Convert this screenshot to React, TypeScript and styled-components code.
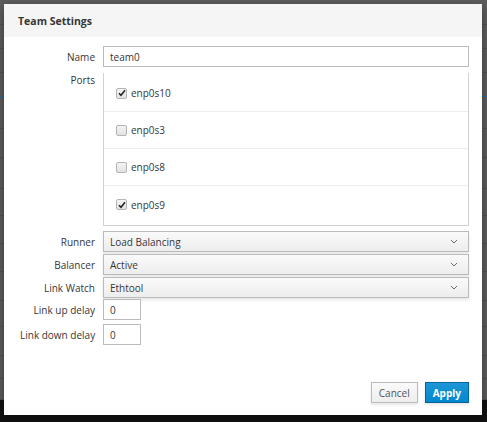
import React from "react";
import styled, { createGlobalStyle } from "styled-components";

const Global = createGlobalStyle`
  html, body { margin: 0; padding: 0; }
  body {
    width: 487px;
    height: 422px;
    overflow: hidden;
    font-family: "Open Sans", "Liberation Sans", sans-serif;
    font-size: 10px;
    color: #363636;
  }
`;

const Page = styled.div`
  position: relative;
  width: 487px;
  height: 422px;
  background: #5d5d5d;
  display: flex;
  flex-direction: column;
`;

const BgRow = styled.div<{ $h: number; $accent?: boolean }>`
  height: ${(p) => p.$h}px;
  box-sizing: border-box;
  border-bottom: 1px solid ${(p) => (p.$accent ? "#1b6aa5" : "#505050")};
`;

const BgFooter = styled.div`
  flex: 1;
  background: #121212;
`;

const Modal = styled.div`
  position: absolute;
  left: 4px;
  top: 4px;
  width: 478px;
  height: 411px;
  background: #fff;
  box-shadow: 0 3px 9px rgba(0, 0, 0, 0.4);
  display: flex;
  flex-direction: column;
`;

const Header = styled.div`
  height: 33px;
  background: #f5f5f5;
  display: flex;
  align-items: center;
  padding-left: 14px;
  font-weight: 700;
  font-size: 10.5px;
  color: #363636;
`;

const Body = styled.div`
  flex: 1;
  display: flex;
  flex-direction: column;
  padding: 9px 13px 0 16px;
`;

const Row = styled.div<{ $mt: number; $top?: boolean }>`
  display: flex;
  align-items: ${(p) => (p.$top ? "flex-start" : "center")};
  margin-top: ${(p) => p.$mt}px;
`;

const Label = styled.div<{ $pt?: number }>`
  width: 75px;
  flex: none;
  text-align: right;
  margin-right: 8px;
  padding-top: ${(p) => p.$pt ?? 0}px;
  white-space: nowrap;
`;

const TextInput = styled.div<{ $w?: number }>`
  box-sizing: border-box;
  height: 21px;
  ${(p) => (p.$w ? `width: ${p.$w}px;` : "flex: 1;")}
  border: 1px solid #bbb;
  background: #fff;
  padding: 0 8px 0 6px;
  display: flex;
  align-items: center;
`;

const PortList = styled.div`
  flex: 1;
  box-sizing: border-box;
  height: 153px;
  border: 1px solid #d1d1d1;
  border-top: none;
  padding: 2px 0;
`;

const PortRow = styled.div<{ $last?: boolean }>`
  height: 37px;
  box-sizing: border-box;
  display: flex;
  align-items: center;
  padding-left: 12px;
  border-bottom: ${(p) => (p.$last ? "none" : "1px solid #ededed")};
`;

const Check = styled.span<{ $on: boolean }>`
  width: 9px;
  height: 9px;
  border: 1px solid #b4b4b4;
  border-radius: 2px;
  background: linear-gradient(#f4f4f4, #e2e2e2);
  margin-right: 4px;
  display: flex;
  align-items: center;
  justify-content: center;
`;

const Select = styled.div`
  flex: 1;
  box-sizing: border-box;
  height: 21px;
  border: 1px solid #bbb;
  background: linear-gradient(#fafafa, #ededed);
  box-shadow: 0 2px 3px rgba(3, 3, 3, 0.1);
  display: flex;
  align-items: center;
  justify-content: space-between;
  padding: 0 10px 0 6px;
`;

const Footer = styled.div`
  display: flex;
  justify-content: flex-end;
  gap: 7px;
  padding: 0 13px 12px 0;
`;

const Button = styled.button<{ $primary?: boolean }>`
  box-sizing: border-box;
  height: 21px;
  font-family: inherit;
  font-size: 10px;
  padding: 0 7px;
  border: 1px solid ${(p) => (p.$primary ? "#00659c" : "#bbb")};
  background: ${(p) =>
    p.$primary ? "linear-gradient(#1f95d6, #0088ce)" : "linear-gradient(#fafafa, #ededed)"};
  color: ${(p) => (p.$primary ? "#fff" : "#4d5258")};
  font-weight: ${(p) => (p.$primary ? 700 : 400)};
  box-shadow: 0 2px 3px rgba(3, 3, 3, 0.1);
`;

const Chevron = () => (
  <svg width="8" height="5" viewBox="0 0 8 5">
    <path d="M1 1 L4 4 L7 1" fill="none" stroke="#6a6a6a" strokeWidth="1" />
  </svg>
);

const Tick = () => (
  <svg width="8" height="8" viewBox="0 0 8 8">
    <path d="M1 4.2 L3 6.3 L7 1.2" fill="none" stroke="#222" strokeWidth="1.5" />
  </svg>
);

const ports = [
  { name: "enp0s10", on: true },
  { name: "enp0s3", on: false },
  { name: "enp0s8", on: false },
  { name: "enp0s9", on: true },
];

const bgRows = [25, 24, 24, 24, 32, 29, 31, 27, 28, 28, 29, 26, 29, 23, 21];

export default function App() {
  return (
    <>
      <Global />
      <Page>
        {bgRows.map((h, i) => (
          <BgRow key={i} $h={h} $accent={i === 3} />
        ))}
        <BgFooter />
        <Modal>
          <Header>Team Settings</Header>
          <Body>
            <Row $mt={0}>
              <Label>Name</Label>
              <TextInput>team0</TextInput>
            </Row>
            <Row $mt={6} $top>
              <Label $pt={0}>Ports</Label>
              <PortList>
                {ports.map((p, i) => (
                  <PortRow key={p.name} $last={i === ports.length - 1}>
                    <Check $on={p.on}>{p.on && <Tick />}</Check>
                    {p.name}
                  </PortRow>
                ))}
              </PortList>
            </Row>
            <Row $mt={5}>
              <Label>Runner</Label>
              <Select>
                Load Balancing
                <Chevron />
              </Select>
            </Row>
            <Row $mt={2}>
              <Label>Balancer</Label>
              <Select>
                Active
                <Chevron />
              </Select>
            </Row>
            <Row $mt={2}>
              <Label>Link Watch</Label>
              <Select>
                Ethtool
                <Chevron />
              </Select>
            </Row>
            <Row $mt={1}>
              <Label>Link up delay</Label>
              <TextInput $w={38}>0</TextInput>
            </Row>
            <Row $mt={4}>
              <Label>Link down delay</Label>
              <TextInput $w={38}>0</TextInput>
            </Row>
          </Body>
          <Footer>
            <Button>Cancel</Button>
            <Button $primary>Apply</Button>
          </Footer>
        </Modal>
      </Page>
    </>
  );
}
